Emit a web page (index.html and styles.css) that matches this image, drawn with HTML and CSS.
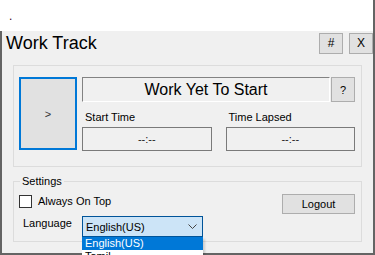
FILE: index.html
```html
<!DOCTYPE html>
<html lang="en">
<head>
    <meta charset="UTF-8">
    <title>Work Track</title>
    <link rel="stylesheet" href="styles.css">
</head>
<body>
    <div class="app">
        <div class="topbar"><span class="dot">.</span></div>

        <div class="main">
            <div class="header">
                <h1>Work Track</h1>
                <div class="header-buttons">
                    <button class="btn btn-small">#</button>
                    <button class="btn btn-small">X</button>
                </div>
            </div>

            <div class="group tracker">
                <button class="start-button">&gt;</button>
                <div class="tracker-info">
                    <div class="status-row">
                        <div class="status-box">Work Yet To Start</div>
                        <button class="btn help-button">?</button>
                    </div>
                    <div class="time-labels">
                        <span>Start Time</span>
                        <span>Time Lapsed</span>
                    </div>
                    <div class="time-row">
                        <div class="time-box">--:--</div>
                        <div class="time-box">--:--</div>
                    </div>
                </div>
            </div>

            <div class="group settings">
                <span class="legend">Settings</span>
                <div class="settings-row">
                    <label class="check">
                        <span class="check-box"></span>
                        <span>Always On Top</span>
                    </label>
                    <button class="btn logout-button">Logout</button>
                </div>
                <div class="settings-row language-row">
                    <span class="language-label">Language</span>
                    <div class="combo">
                        <span>English(US)</span>
                        <svg width="9" height="5" viewBox="0 0 9 5"><polyline points="0.5,0.5 4.5,4.5 8.5,0.5" fill="none" stroke="#444" stroke-width="1"/></svg>
                        <ul class="combo-list">
                            <li class="selected">English(US)</li>
                            <li>Tamil</li>
                        </ul>
                    </div>
                </div>
            </div>
        </div>
    </div>
</body>
</html>
```

FILE: styles.css
```css
* {
    margin: 0;
    padding: 0;
    box-sizing: border-box;
}

body {
    font-family: "Liberation Sans", Arial, sans-serif;
    font-size: 11px;
    color: #000;
    background: #fff;
    overflow: hidden;
}

.app {
    width: 375px;
    height: 255px;
    display: flex;
    flex-direction: column;
    border-right: 2px solid #646464;
}

.topbar {
    height: 31px;
    background: #fff;
    padding-left: 9px;
    line-height: 32px;
    font-size: 12px;
}

.dot {
    color: #400020;
}

.main {
    flex: 1;
    background: #f0f0f0;
    border-left: 2px solid #646464;
    border-bottom: 2px solid #646464;
}

.header {
    display: flex;
    justify-content: space-between;
    align-items: center;
    height: 22px;
    margin-top: 1px;
    padding-left: 4px;
}

.header h1 {
    font-size: 18px;
    font-weight: normal;
    line-height: 22px;
}

.header-buttons {
    display: flex;
    gap: 6px;
}

.btn {
    font-family: inherit;
    background: #e1e1e1;
    border: 1px solid #adadad;
    color: #000;
    cursor: pointer;
}

.btn-small {
    width: 24px;
    height: 21px;
    font-size: 12px;
}

.group {
    border: 1px solid #dcdcdc;
    margin: 0 11px;
}

.tracker {
    margin-top: 11px;
    height: 102px;
    display: flex;
    gap: 5px;
    padding: 11px 6px 0 5px;
}

.start-button {
    width: 58px;
    height: 73px;
    background: #e1e1e1;
    border: 2px solid #0078d7;
    font-family: inherit;
    font-size: 11px;
    color: #333;
}

.tracker-info {
    flex: 1;
}

.status-row {
    display: flex;
    gap: 1px;
    height: 25px;
}

.status-box {
    flex: 1;
    border-top: 1px solid #828282;
    border-left: 1px solid #828282;
    border-right: 1px solid #fff;
    border-bottom: 1px solid #fff;
    font-size: 16px;
    line-height: 23px;
    text-align: center;
}

.help-button {
    width: 24px;
    font-size: 11px;
}

.time-labels {
    display: flex;
    gap: 14px;
    margin-top: 9px;
    line-height: 13px;
}

.time-labels span {
    flex: 1;
    padding-left: 3px;
}

.time-row {
    display: flex;
    gap: 14px;
    margin-top: 3px;
}

.time-box {
    flex: 1;
    height: 24px;
    border: 1px solid #7a7a7a;
    line-height: 22px;
    text-align: center;
    color: #222;
}

.settings {
    position: relative;
    margin-top: 14px;
    height: 61px;
    padding: 12px 6px 0 5px;
}

.legend {
    position: absolute;
    top: -7px;
    left: 6px;
    padding: 0 2px;
    line-height: 13px;
    background: #f0f0f0;
}

.settings-row {
    display: flex;
    justify-content: space-between;
    align-items: flex-start;
    height: 20px;
}

.check {
    display: flex;
    align-items: center;
    gap: 6px;
    margin-top: 1px;
    line-height: 13px;
}

.check-box {
    width: 13px;
    height: 13px;
    border: 1px solid #333;
    background: #fff;
}

.logout-button {
    width: 73px;
    height: 20px;
    font-size: 11px;
}

.language-row {
    justify-content: flex-start;
    margin-top: 2px;
    height: 21px;
}

.language-label {
    width: 63px;
    padding-left: 4px;
    line-height: 15px;
}

.combo {
    position: relative;
    width: 121px;
    height: 21px;
    background: #cce4f7;
    border: 1px solid #005499;
    display: flex;
    align-items: center;
    justify-content: space-between;
    padding: 0 5px 0 3px;
}

.combo-list {
    position: absolute;
    top: 20px;
    left: -1px;
    width: 121px;
    list-style: none;
    background: #fff;
    box-shadow: 2px 2px 2px rgba(0, 0, 0, 0.15);
}

.combo-list li {
    height: 13px;
    line-height: 13px;
    padding-left: 3px;
}

.combo-list li.selected {
    background: #0078d7;
    color: #fff;
}
```
